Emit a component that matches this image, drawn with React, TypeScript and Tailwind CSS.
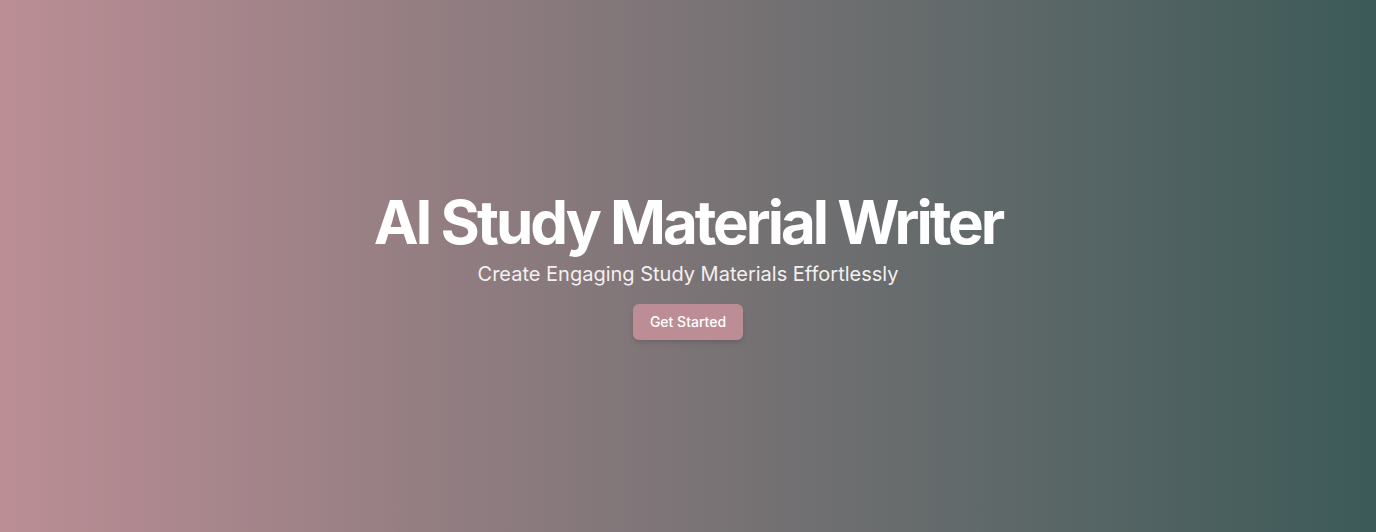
export default function App() {
  return (
    <div
      className="flex h-[532px] w-full flex-col items-center justify-center bg-[linear-gradient(to_right,#bb8e95,#3c5a58)] text-white"
      style={{ fontFamily: "Inter, 'Noto Sans', sans-serif" }}
    >
      <h1 className="text-6xl font-bold tracking-tighter">AI Study Material Writer</h1>
      <p className="mt-2 text-xl text-[#f3f0f1]">Create Engaging Study Materials Effortlessly</p>
      <button className="mt-4 rounded-md bg-[#bc8d95] px-[17px] py-2 text-sm font-medium text-white shadow-md">
        Get Started
      </button>
    </div>
  );
}
